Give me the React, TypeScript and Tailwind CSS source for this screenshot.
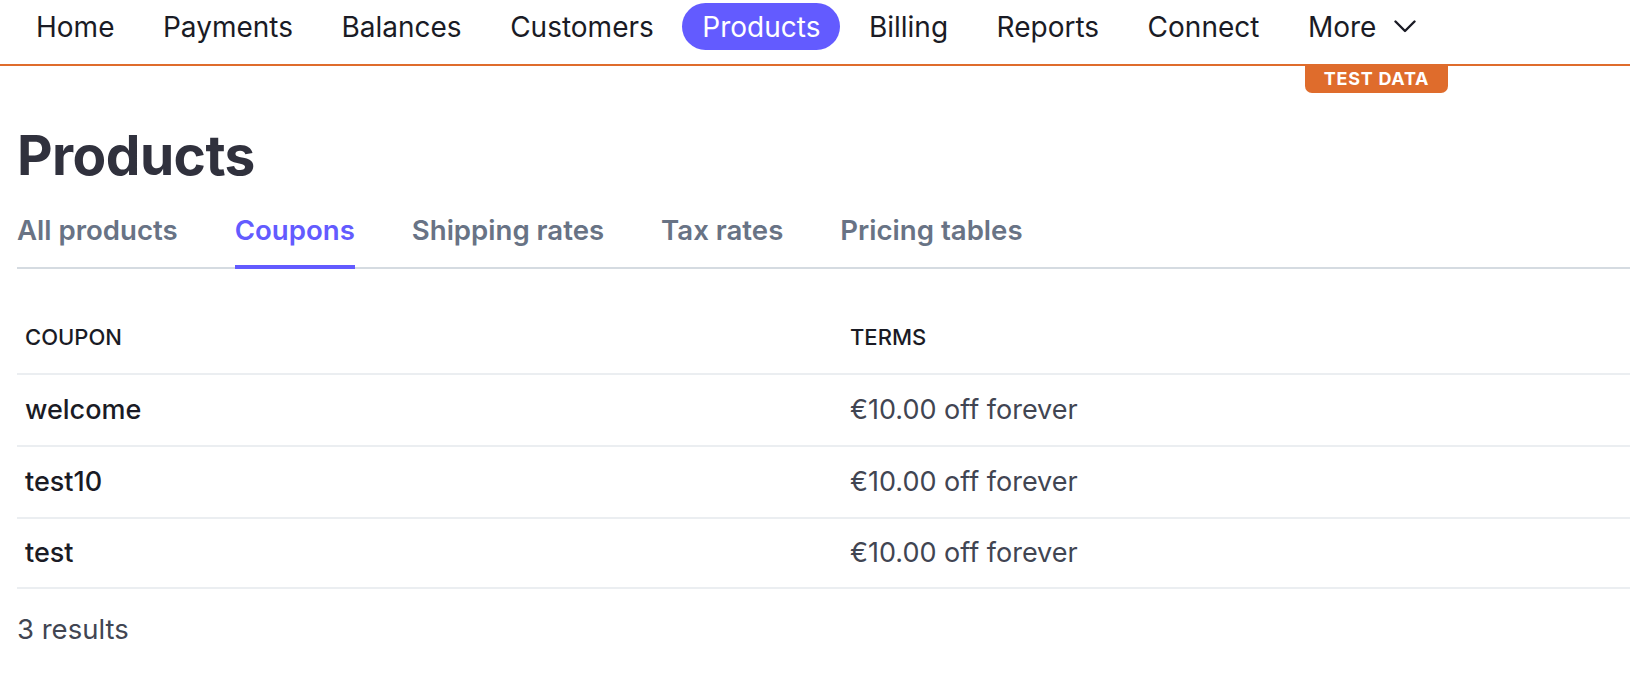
const navItems = ['Home', 'Payments', 'Balances', 'Customers', 'Products', 'Billing', 'Reports', 'Connect'];
const tabs = ['All products', 'Coupons', 'Shipping rates', 'Tax rates', 'Pricing tables'];
const coupons = [
  { name: 'welcome', terms: '€10.00 off forever' },
  { name: 'test10', terms: '€10.00 off forever' },
  { name: 'test', terms: '€10.00 off forever' },
];

export default function App() {
  return (
    <div className="min-h-screen w-full bg-white text-[#1a1b25]" style={{ fontFamily: 'Inter, "Noto Sans", sans-serif' }}>
      {/* top nav */}
      <div className="relative border-b-2 border-[#df6c2c]">
        <nav className="flex h-[64px] items-start gap-[8.5px] pl-[16px] pt-[3px]">
          {navItems.map((item) => (
            <a
              key={item}
              className={`flex h-[47px] items-center rounded-full px-5 text-[28px] leading-none ${
                item === 'Products' ? 'bg-[#635bff] text-white' : 'text-[#1a1b25]'
              }`}
            >
              {item}
            </a>
          ))}
          <a className="flex h-[47px] items-center gap-[18px] px-5 text-[28px] leading-none text-[#1a1b25]">
            More
            <svg width="22" height="13" viewBox="0 0 22 13" fill="none">
              <polyline points="1.5,1.5 11,11 20.5,1.5" stroke="#1a1b25" strokeWidth="2.4" strokeLinecap="round" strokeLinejoin="round" />
            </svg>
          </a>
        </nav>
        <div className="absolute left-[1305px] top-[64px] flex h-[29px] w-[143px] items-center justify-center rounded-b-[7px] bg-[#df6c2c] text-[18px] font-bold tracking-[0.04em] text-white">
          TEST DATA
        </div>
      </div>

      <div className="pl-[17px]">
        <h1 className="mt-[62px] text-[55px] font-bold leading-none tracking-[-0.01em] text-[#30313d]">Products</h1>

        {/* tabs */}
        <div className="mt-[34px] flex gap-[57px] border-b-2 border-[#d5dbe1]">
          {tabs.map((tab) => (
            <div
              key={tab}
              className={`-mb-[2px] border-b-4 pb-[20px] text-[27.6px] font-semibold leading-none ${
                tab === 'Coupons' ? 'border-[#635bff] text-[#635bff]' : 'border-transparent text-[#687385]'
              }`}
            >
              {tab}
            </div>
          ))}
        </div>

        {/* table */}
        <div className="mt-[34px]">
          <div className="flex h-[72px] items-center border-b-2 border-[#ebeef1] text-[22px] font-medium uppercase">
            <div className="w-[825px] pl-2">Coupon</div>
            <div className="pl-2">Terms</div>
          </div>
          {coupons.map((c, i) => (
            <div
              key={c.name}
              className={`flex items-center border-b-2 border-[#ebeef1] text-[27px] leading-none ${
                i === coupons.length - 1 ? 'h-[70px]' : 'h-[72px]'
              }`}
            >
              <div className="w-[825px] pl-2 font-medium text-[#1a1b25]">{c.name}</div>
              <div className="pl-2 text-[#414552]">{c.terms}</div>
            </div>
          ))}
        </div>

        <div className="mt-[27px] text-[27.5px] leading-none text-[#414552]">3 results</div>
      </div>
    </div>
  );
}
